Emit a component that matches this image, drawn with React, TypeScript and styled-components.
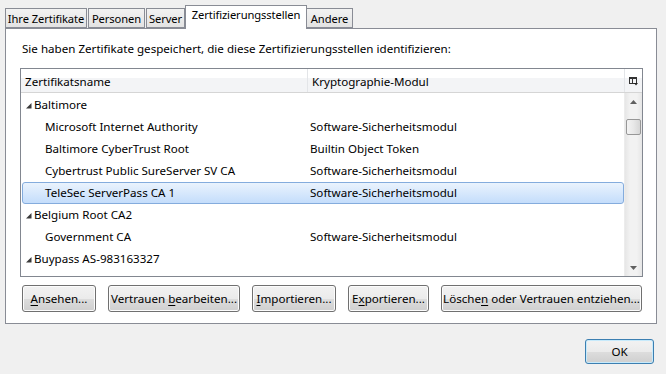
import styled, { createGlobalStyle } from 'styled-components';

const GlobalStyle = createGlobalStyle`
  body {
    margin: 0;
    background: #f0f0f0;
    font-family: 'Noto Sans', 'Open Sans', sans-serif;
    font-size: 11.6px;
    color: #000;
  }
`;

const Window = styled.div`
  width: 666px;
  height: 374px;
  box-sizing: border-box;
  padding: 5px 9px 0 5px;
  background: #f0f0f0;
  display: flex;
  flex-direction: column;
`;

const TabBar = styled.div`
  display: flex;
  align-items: flex-end;
  height: 23px;
  position: relative;
  z-index: 1;
`;

const Tab = styled.div<{ $active?: boolean; $w: number }>`
  box-sizing: border-box;
  width: ${(p) => p.$w}px;
  height: ${(p) => (p.$active ? '24px' : '20px')};
  margin-bottom: ${(p) => (p.$active ? '-1px' : '0')};
  margin-left: ${(p) => (p.$active ? '-1px' : '0')};
  margin-right: ${(p) => (p.$active ? '-1px' : '1px')};
  padding-top: ${(p) => (p.$active ? '1px' : '2px')};
  border: 1px solid #898c95;
  border-bottom: ${(p) => (p.$active ? 'none' : '1px solid #898c95')};
  background: ${(p) =>
    p.$active ? '#fff' : 'linear-gradient(#f2f2f2, #e3e3e3)'};
  white-space: nowrap;
  text-align: center;
  font-size: 11.2px;
  letter-spacing: -0.1px;
  line-height: 16px;
`;

const Panel = styled.div`
  box-sizing: border-box;
  height: 296px;
  border: 1px solid #898c95;
  background: #fff;
  padding: 12px 13px 11px 14px;
  display: flex;
  flex-direction: column;
`;

const Intro = styled.div`
  padding-left: 2px;
  line-height: 16px;
  height: 27px;
`;

const List = styled.div`
  box-sizing: border-box;
  height: 209px;
  border: 1px solid #828790;
  display: flex;
  flex-direction: column;
`;

const Header = styled.div`
  display: flex;
  height: 23px;
  border-bottom: 1px solid #d5d5d5;
  background: linear-gradient(#ffffff 0%, #ffffff 40%, #f3f4f6 41%, #f3f4f6 100%);
  line-height: 20px;
`;

const HeaderCell = styled.div<{ $w?: number }>`
  box-sizing: border-box;
  width: ${(p) => (p.$w ? `${p.$w}px` : 'auto')};
  flex: ${(p) => (p.$w ? 'none' : '1')};
  padding: 3px 0 0 4px;
  border-right: 1px solid #e3e5e8;
`;

const HeaderPick = styled.div`
  width: 17px;
  display: flex;
  align-items: center;
  justify-content: center;
  padding-top: 1px;
`;

const Body = styled.div`
  flex: 1;
  display: flex;
`;

const Rows = styled.div`
  padding-top: 1px;
  flex: 1;
`;

const Row = styled.div<{ $selected?: boolean }>`
  box-sizing: border-box;
  display: flex;
  height: 22px;
  line-height: 20px;
  margin-left: 1px;
  border: 1px solid ${(p) => (p.$selected ? '#84acdd' : 'transparent')};
  border-radius: 3px;
  background: ${(p) =>
    p.$selected ? 'linear-gradient(#eaf3fd, #c4ddfb)' : 'transparent'};
`;

const NameCell = styled.div<{ $child?: boolean }>`
  width: 286px;
  box-sizing: border-box;
  padding-left: ${(p) => (p.$child ? '22px' : '3px')};
  display: flex;
  align-items: center;
  white-space: nowrap;
`;

const ModCell = styled.div`
  padding-left: 1px;
  white-space: nowrap;
`;

const Twisty = styled.svg`
  width: 6px;
  height: 6px;
  margin-right: 2px;
  margin-top: 1px;
`;

const Scrollbar = styled.div`
  width: 17px;
  background: linear-gradient(90deg, #e6e6e6, #f2f2f2 30%, #f2f2f2 70%, #e6e6e6);
  border-left: 1px solid #ececec;
  display: flex;
  flex-direction: column;
  align-items: center;
`;

const Arrow = styled.div<{ $down?: boolean }>`
  height: 17px;
  width: 17px;
  display: flex;
  align-items: center;
  justify-content: center;
  margin-top: ${(p) => (p.$down ? 'auto' : '0')};
`;

const Thumb = styled.div`
  box-sizing: border-box;
  margin-top: 9px;
  width: 15px;
  height: 16px;
  border: 1px solid #979797;
  border-radius: 2px;
  background: linear-gradient(90deg, #f3f3f3, #e8e8e8 50%, #d6d6d6);
`;

const ButtonRow = styled.div`
  display: flex;
  gap: 12px;
  margin-top: 8px;
  padding-left: 2px;
`;

const Button = styled.div<{ $w: number; $default?: boolean }>`
  box-sizing: border-box;
  width: ${(p) => p.$w}px;
  height: ${(p) => (p.$default ? '25px' : '27px')};
  border: 1px solid ${(p) => (p.$default ? '#3c7fb1' : '#707070')};
  border-radius: 3px;
  box-shadow: inset 0 0 0 1px ${(p) => (p.$default ? '#c7eafb' : '#fcfcfc')};
  background: linear-gradient(#f2f2f2 0%, #ebebeb 50%, #dddddd 51%, #cfcfcf 100%);
  display: flex;
  align-items: center;
  justify-content: center;
  white-space: nowrap;
  u {
    text-decoration: underline;
    text-underline-offset: 2px;
  }
`;

const Footer = styled.div`
  display: flex;
  justify-content: flex-end;
  padding-top: 15px;
  padding-right: 3px;
`;

const rows: { name: string; mod?: string; child?: boolean; selected?: boolean }[] = [
  { name: 'Baltimore' },
  { name: 'Microsoft Internet Authority', mod: 'Software-Sicherheitsmodul', child: true },
  { name: 'Baltimore CyberTrust Root', mod: 'Builtin Object Token', child: true },
  { name: 'Cybertrust Public SureServer SV CA', mod: 'Software-Sicherheitsmodul', child: true },
  { name: 'TeleSec ServerPass CA 1', mod: 'Software-Sicherheitsmodul', child: true, selected: true },
  { name: 'Belgium Root CA2' },
  { name: 'Government CA', mod: 'Software-Sicherheitsmodul', child: true },
  { name: 'Buypass AS-983163327' },
];

const tabs = [
  { label: 'Ihre Zertifikate', w: 82 },
  { label: 'Personen', w: 57 },
  { label: 'Server', w: 39 },
  { label: 'Zertifizierungsstellen', w: 122, active: true },
  { label: 'Andere', w: 47 },
];

export default function App() {
  return (
    <Window>
      <GlobalStyle />
      <TabBar>
        {tabs.map((t) => (
          <Tab key={t.label} $w={t.w} $active={t.active}>
            {t.label}
          </Tab>
        ))}
      </TabBar>
      <Panel>
        <Intro>Sie haben Zertifikate gespeichert, die diese Zertifizierungsstellen identifizieren:</Intro>
        <List>
          <Header>
            <HeaderCell $w={287}>Zertifikatsname</HeaderCell>
            <HeaderCell>Kryptographie-Modul</HeaderCell>
            <HeaderPick>
              <svg width="9" height="9" viewBox="0 0 9 9">
                <rect x="0.5" y="0.5" width="7" height="6" fill="none" stroke="#333" />
                <rect x="0" y="0" width="8" height="2" fill="#333" />
                <line x1="3.5" y1="2" x2="3.5" y2="7" stroke="#333" />
                <path d="M5 6 L9 6 L7 8.5 Z" fill="#222" />
              </svg>
            </HeaderPick>
          </Header>
          <Body>
            <Rows>
              {rows.map((r) => (
                <Row key={r.name} $selected={r.selected}>
                  <NameCell $child={r.child}>
                    {!r.child && (
                      <Twisty viewBox="0 0 6 6">
                        <path d="M5.5 0 L5.5 5.5 L0 5.5 Z" fill="#3a3a3a" />
                      </Twisty>
                    )}
                    {r.name}
                  </NameCell>
                  <ModCell>{r.mod}</ModCell>
                </Row>
              ))}
            </Rows>
            <Scrollbar>
              <Arrow>
                <svg width="7" height="4" viewBox="0 0 7 4">
                  <path d="M0 4 L3.5 0 L7 4 Z" fill="#606060" />
                </svg>
              </Arrow>
              <Thumb />
              <Arrow $down>
                <svg width="7" height="4" viewBox="0 0 7 4">
                  <path d="M0 0 L7 0 L3.5 4 Z" fill="#606060" />
                </svg>
              </Arrow>
            </Scrollbar>
          </Body>
        </List>
        <ButtonRow>
          <Button $w={74}>
            <span><u>A</u>nsehen...</span>
          </Button>
          <Button $w={132}>
            <span>Vertrauen <u>b</u>earbeiten...</span>
          </Button>
          <Button $w={84}>
            <span><u>I</u>mportieren...</span>
          </Button>
          <Button $w={81}>
            <span>E<u>x</u>portieren...</span>
          </Button>
          <Button $w={201}>
            <span>Lösche<u>n</u> oder Vertrauen entziehen...</span>
          </Button>
        </ButtonRow>
      </Panel>
      <Footer>
        <Button $w={69} $default>
          OK
        </Button>
      </Footer>
    </Window>
  );
}
